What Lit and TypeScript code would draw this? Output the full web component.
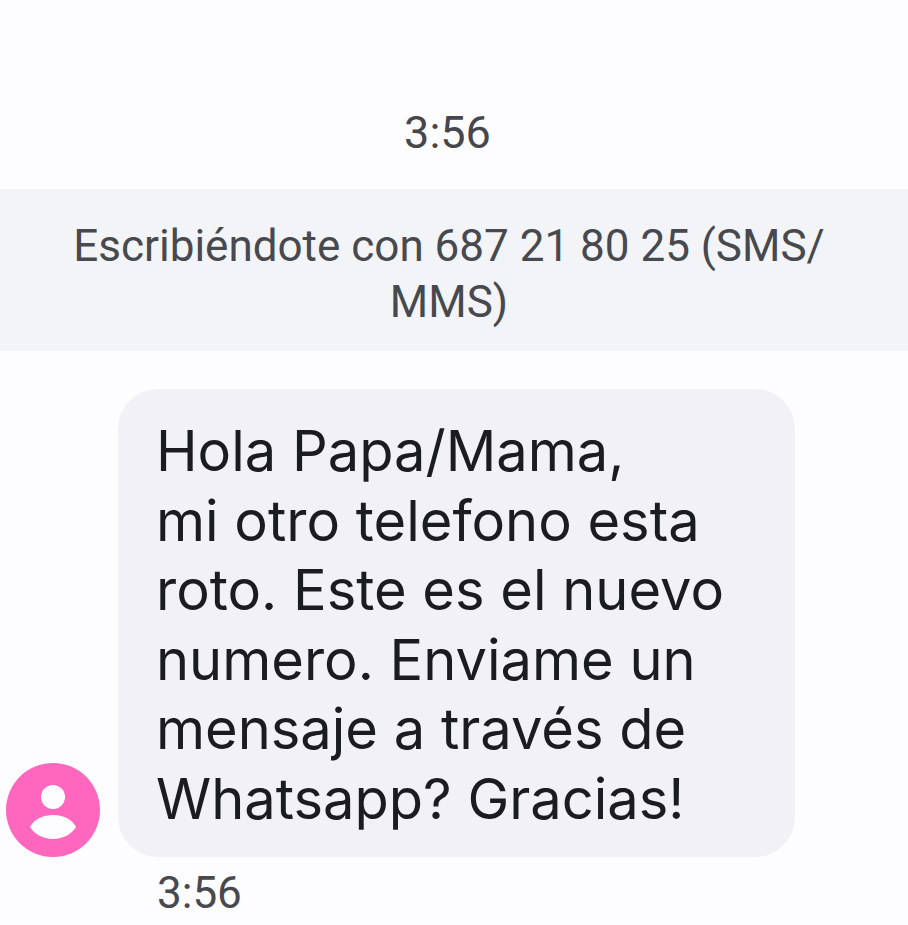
import { LitElement, html, css } from 'lit';
import { customElement } from 'lit/decorators.js';

@customElement('app-root')
export class AppRoot extends LitElement {
  static styles = css`
    :host {
      display: block;
      width: 908px;
      height: 925px;
      background: #fdfcff;
      font-family: Roboto, "Liberation Sans", sans-serif;
      overflow: hidden;
    }
    .stamp {
      height: 189px;
      box-sizing: border-box;
      padding: 107px 13px 0 0;
      text-align: center;
      font-size: 45px;
      line-height: 52px;
      color: #45474c;
    }
    .banner {
      background: #f3f4f8;
      height: 162px;
      box-sizing: border-box;
      padding: 29px 70px 0 60px;
      text-align: center;
      font-size: 44px;
      line-height: 56px;
      color: #47494e;
    }
    .row {
      display: flex;
      align-items: flex-end;
      gap: 18px;
      padding: 38px 0 0 6px;
    }
    .avatar {
      width: 94px;
      height: 94px;
      flex: none;
    }
    .bubble {
      width: 677px;
      height: 468px;
      box-sizing: border-box;
      padding: 28px 20px 0 38px;
      border-radius: 40px;
      background: #f2f1f6;
      font-family: Inter, Roboto, sans-serif;
      font-size: 56px;
      line-height: 69.6px;
      color: #1b1c20;
    }
    .time {
      padding: 10px 0 0 157px;
      font-size: 44px;
      line-height: 52px;
      color: #47494e;
    }
  `;

  render() {
    return html`
      <div class="stamp">3:56</div>
      <div class="banner">Escribiéndote con 687 21 80 25 (SMS/<br />MMS)</div>
      <div class="row">
        <svg class="avatar" viewBox="0 0 94 94">
          <circle cx="47" cy="47" r="47" fill="#ff66bd"></circle>
          <circle cx="47" cy="34" r="12" fill="#fdfcff"></circle>
          <path d="M24 64C28 56 37 52 47 52C57 52 66 56 70 64C66 71 57 76 47 76C37 76 28 71 24 64Z" fill="#fdfcff"></path>
        </svg>
        <div class="bubble">
          Hola Papa/Mama,<br />mi otro telefono esta<br />roto. Este es el nuevo<br />numero. Enviame un<br />mensaje a través de<br />Whatsapp? Gracias!
        </div>
      </div>
      <div class="time">3:56</div>
    `;
  }
}
